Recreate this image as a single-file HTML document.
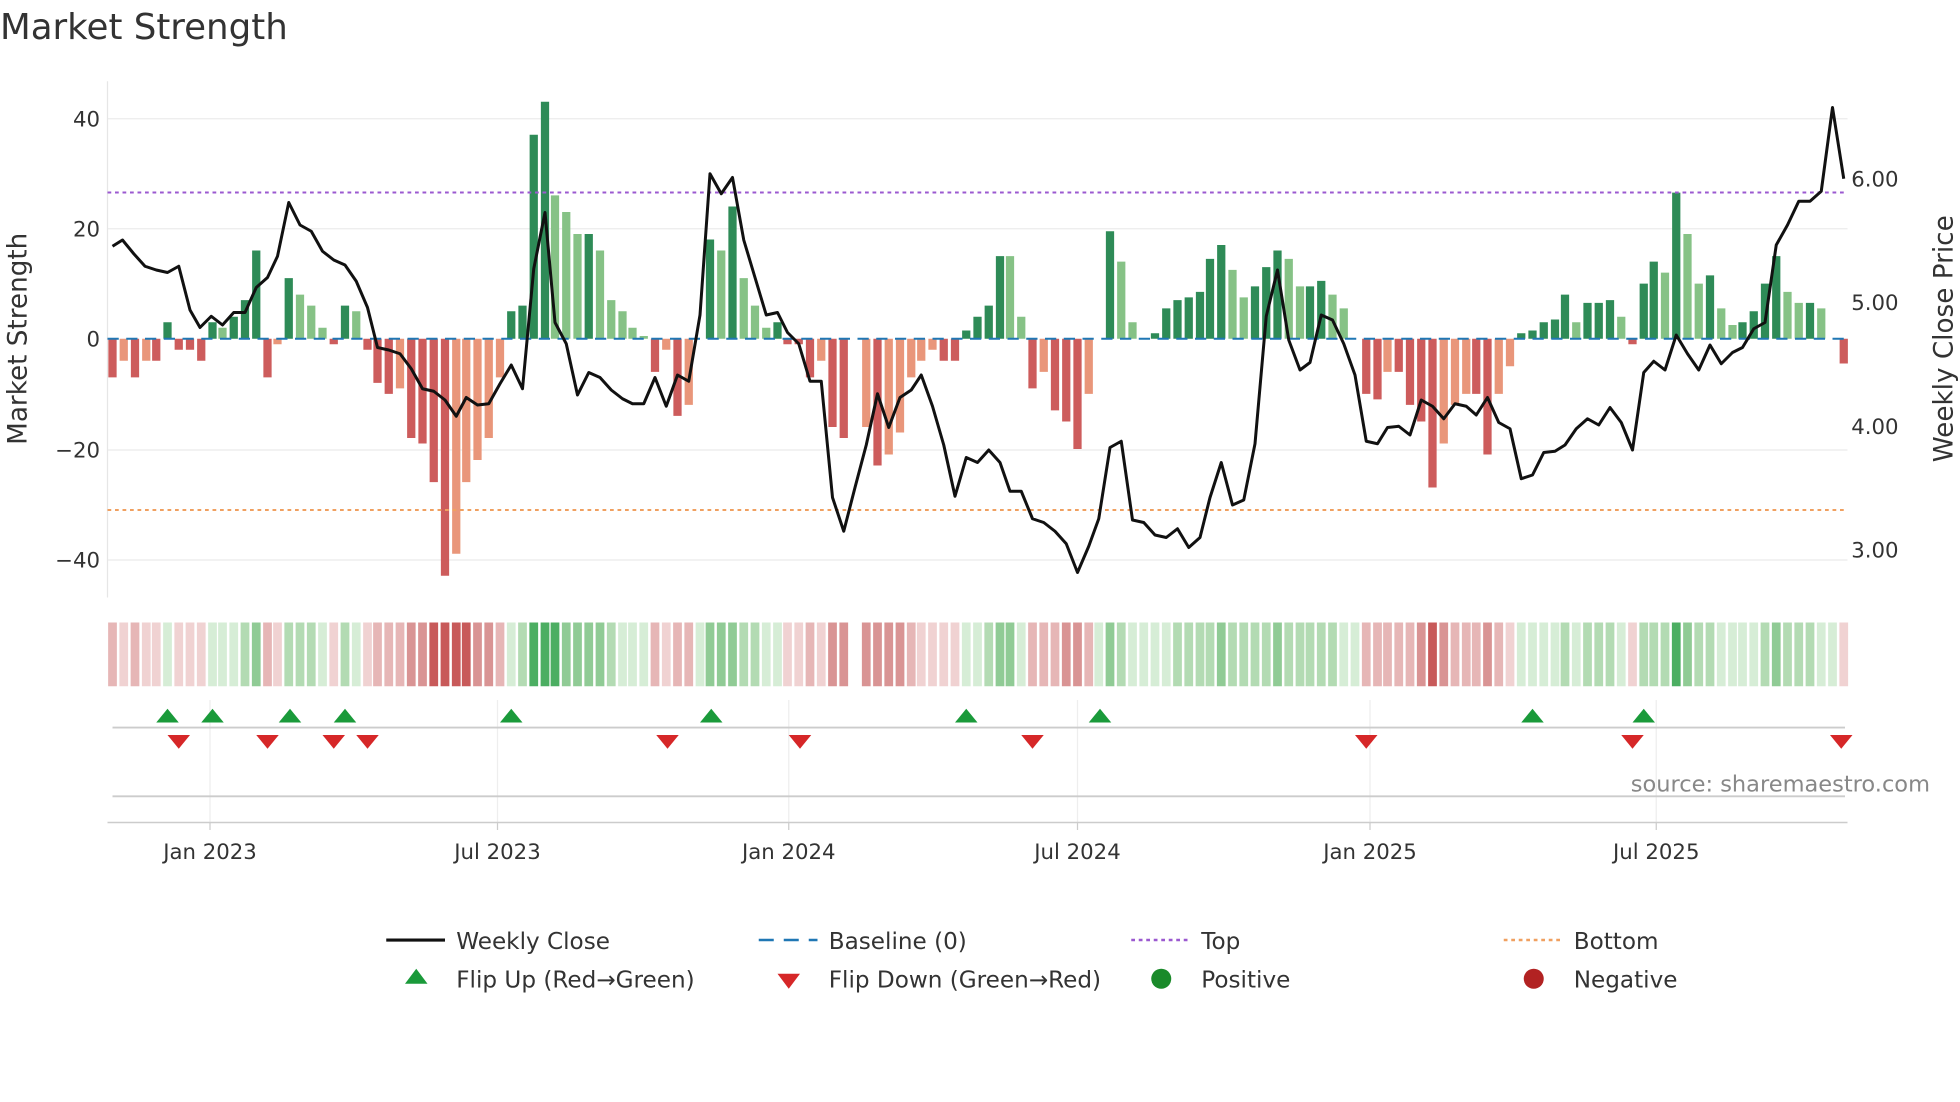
<!DOCTYPE html>
<html><head><meta charset="utf-8"><style>
html,body{margin:0;padding:0;background:#fff;}
svg{display:block;font-family:"DejaVu Sans","Liberation Sans",sans-serif;}
</style></head><body>
<svg width="1960" height="1102" viewBox="0 0 1568 881.6" xmlns="http://www.w3.org/2000/svg">
<rect width="1568" height="882" fill="#fff"/>
<text x="0" y="31" font-size="28.5" fill="#333">Market Strength</text>
<g stroke="#ebebeb" stroke-width="1">
<line x1="86" x2="1478" y1="95" y2="95"/><line x1="86" x2="1478" y1="183" y2="183"/>
<line x1="86" x2="1478" y1="360" y2="360"/><line x1="86" x2="1478" y1="448" y2="448"/>
</g>
<line x1="86" x2="86" y1="65" y2="478" stroke="#e6e6e6"/>
<g font-size="17" fill="#333" text-anchor="end">
<text x="80" y="101">40</text><text x="80" y="189">20</text><text x="80" y="277">0</text>
<text x="80" y="366">−20</text><text x="80" y="454">−40</text>
</g>
<g font-size="17" fill="#333">
<text x="1481" y="149">6.00</text><text x="1481" y="248">5.00</text><text x="1481" y="347">4.00</text><text x="1481" y="446">3.00</text>
</g>
<text transform="translate(21,271) rotate(-90)" font-size="21" fill="#333" text-anchor="middle">Market Strength</text>
<text transform="translate(1562,271) rotate(-90)" font-size="21" fill="#333" text-anchor="middle">Weekly Close Price</text>
<g fill="none" stroke-width="6.6">
<path stroke="#2e8b57" d="M134 271V257.8M170 271V257.8M187 271V253.4M196 271V240.1M205 271V200.4M231 271V222.5M276 271V244.5M409 271V249M418 271V244.5M427 271V107.8M436 271V81.4M471 271V187.2M568 271V191.6M586 271V165.2M622 271V257.8M773 271V264.4M782 271V253.4M791 271V244.5M800 271V204.9M888 271V185M924 271V266.6M933 271V246.7M942 271V240.1M951 271V237.9M960 271V233.5M968 271V207.1M977 271V196M1004 271V229.1M1013 271V213.7M1022 271V200.4M1048 271V229.1M1057 271V224.7M1217 271V266.6M1226 271V264.4M1235 271V257.8M1244 271V255.6M1252 271V235.7M1270 271V242.3M1279 271V242.3M1288 271V240.1M1315 271V226.9M1323 271V209.3M1341 271V154.1M1368 271V220.3M1394 271V257.8M1403 271V249M1412 271V226.9M1421 271V204.9M1448 271V242.3"/>
<path stroke="#86c286" d="M178 271V262.2M240 271V235.7M249 271V244.5M258 271V262.2M285 271V249M444 271V156.3M453 271V169.6M462 271V187.2M480 271V200.4M489 271V240.1M498 271V249M506 271V262.2M515 271V268.8M577 271V200.4M595 271V222.5M604 271V244.5M613 271V262.2M808 271V204.9M817 271V253.4M897 271V209.3M906 271V257.8M986 271V215.9M995 271V237.9M1031 271V207.1M1040 271V229.1M1066 271V235.7M1075 271V246.7M1261 271V257.8M1297 271V253.4M1332 271V218.1M1350 271V187.2M1359 271V226.9M1377 271V246.7M1386 271V260M1430 271V233.5M1439 271V242.3M1457 271V246.7"/>
<path stroke="#cd5c5c" d="M90 271V301.9M108 271V301.9M125 271V288.6M143 271V279.8M152 271V279.8M161 271V288.6M214 271V301.9M267 271V275.4M294 271V279.8M302 271V306.3M311 271V315.1M329 271V350.4M338 271V354.8M347 271V385.7M356 271V460.6M524 271V297.5M542 271V332.7M630 271V275.4M639 271V275.4M648 271V301.9M666 271V341.6M675 271V350.4M702 271V372.4M755 271V288.6M764 271V288.6M826 271V310.7M844 271V328.3M853 271V337.2M862 271V359.2M1093 271V315.1M1102 271V319.5M1119 271V297.5M1128 271V323.9M1137 271V337.2M1146 271V390M1181 271V315.1M1190 271V363.6M1306 271V275.4M1475 271V290.8"/>
<path stroke="#e9967a" d="M99 271V288.6M117 271V288.6M222 271V275.4M320 271V310.7M365 271V443M373 271V385.7M382 271V368M391 271V350.4M400 271V301.9M533 271V279.8M551 271V323.9M657 271V288.6M693 271V341.6M711 271V363.6M720 271V346M729 271V301.9M737 271V288.6M746 271V279.8M835 271V297.5M871 271V315.1M1110 271V297.5M1155 271V354.8M1164 271V323.9M1173 271V315.1M1199 271V315.1M1208 271V293"/>
</g>
<line x1="86" x2="1478" y1="271" y2="271" stroke="#1f77b4" stroke-width="1.6" stroke-dasharray="9,6"/>
<line x1="86" x2="1478" y1="154" y2="154" stroke="#9b59d0" stroke-width="1.6" stroke-dasharray="3,3"/>
<line x1="86" x2="1478" y1="408" y2="408" stroke="#f0a060" stroke-width="1.6" stroke-dasharray="3,3"/>
<polyline fill="none" stroke="#111" stroke-width="2.4" stroke-linejoin="round" points="90,197 98,192 107,203 116,213 125,216 134,218 143,213 152,248 160,262 169,253 178,260 187,250 196,250 205,230 214,222 222,205 231,162 240,180 249,185 258,201 267,208 276,212 285,225 294,246 302,278 311,280 320,283 329,295 338,311 347,313 356,320 365,333 373,318 382,324 391,323 400,307 409,292 418,311 427,215 436,170 444,258 453,275 462,316 471,298 480,302 489,312 498,319 506,323 515,323 524,302 533,325 542,300 551,305 560,252 568,139 577,155 586,142 595,192 604,222 613,252 622,250 630,266 639,275 648,305 657,305 666,398 675,425 684,390 693,356 702,315 711,342 720,318 729,312 737,300 746,325 755,356 764,397 773,366 782,370 791,360 800,370 808,393 817,393 826,415 835,418 844,425 853,435 862,458 871,437 879,415 888,358 897,353 906,416 915,418 924,428 933,430 942,423 951,438 960,430 968,398 977,370 986,404 995,400 1004,355 1013,253 1022,216 1031,272 1040,296 1048,290 1057,252 1066,256 1075,275 1084,300 1093,353 1102,355 1110,342 1119,341 1128,348 1137,320 1146,325 1155,335 1164,323 1173,325 1181,332 1190,318 1199,338 1208,343 1217,383 1226,380 1235,362 1244,361 1252,356 1261,343 1270,335 1279,340 1288,326 1297,338 1306,360 1315,298 1323,289 1332,296 1341,268 1350,283 1359,296 1368,276 1377,291 1386,282 1394,278 1403,263 1412,258 1421,196 1430,180 1439,161 1448,161 1457,153 1466,86 1475,143"/>
<g fill="none" stroke-width="7">
<path stroke="#d6edd6" d="M134 498V549M170 498V549M178 498V549M187 498V549M258 498V549M285 498V549M409 498V549M498 498V549M506 498V549M515 498V549M560 498V549M613 498V549M622 498V549M773 498V549M782 498V549M817 498V549M879 498V549M906 498V549M915 498V549M924 498V549M933 498V549M1075 498V549M1084 498V549M1217 498V549M1226 498V549M1235 498V549M1244 498V549M1261 498V549M1297 498V549M1377 498V549M1386 498V549M1394 498V549M1403 498V549M1457 498V549M1466 498V549"/>
<path stroke="#b3dbb3" d="M196 498V549M231 498V549M240 498V549M249 498V549M276 498V549M418 498V549M489 498V549M595 498V549M604 498V549M791 498V549M897 498V549M942 498V549M951 498V549M960 498V549M968 498V549M986 498V549M995 498V549M1004 498V549M1013 498V549M1031 498V549M1040 498V549M1048 498V549M1057 498V549M1066 498V549M1252 498V549M1270 498V549M1279 498V549M1288 498V549M1315 498V549M1323 498V549M1332 498V549M1359 498V549M1368 498V549M1412 498V549M1430 498V549M1439 498V549M1448 498V549"/>
<path stroke="#90cb95" d="M205 498V549M453 498V549M462 498V549M471 498V549M480 498V549M568 498V549M577 498V549M586 498V549M800 498V549M808 498V549M888 498V549M977 498V549M1022 498V549M1350 498V549M1421 498V549"/>
<path stroke="#4cae62" d="M427 498V549M436 498V549M444 498V549M1341 498V549"/>
<path stroke="#f0d2d2" d="M99 498V549M117 498V549M125 498V549M143 498V549M152 498V549M161 498V549M222 498V549M267 498V549M294 498V549M533 498V549M630 498V549M639 498V549M657 498V549M737 498V549M746 498V549M755 498V549M764 498V549M1208 498V549M1306 498V549M1475 498V549"/>
<path stroke="#e6b6b6" d="M90 498V549M108 498V549M214 498V549M302 498V549M311 498V549M320 498V549M400 498V549M524 498V549M542 498V549M551 498V549M648 498V549M729 498V549M826 498V549M835 498V549M844 498V549M871 498V549M1093 498V549M1102 498V549M1110 498V549M1119 498V549M1128 498V549M1164 498V549M1173 498V549M1181 498V549M1199 498V549"/>
<path stroke="#d99494" d="M329 498V549M338 498V549M382 498V549M391 498V549M666 498V549M675 498V549M693 498V549M702 498V549M711 498V549M720 498V549M853 498V549M862 498V549M1137 498V549M1155 498V549M1190 498V549"/>
<path stroke="#c85a5a" d="M347 498V549M356 498V549M365 498V549M373 498V549M1146 498V549"/>
</g>
<g stroke="#eee"><line x1="168" x2="168" y1="560" y2="658"/><line x1="398" x2="398" y1="560" y2="658"/><line x1="631" x2="631" y1="560" y2="658"/><line x1="862" x2="862" y1="560" y2="658"/><line x1="1096" x2="1096" y1="560" y2="658"/><line x1="1325" x2="1325" y1="560" y2="658"/></g>
<line x1="90" x2="1476" y1="582" y2="582" stroke="#ccc" stroke-width="1.5"/>
<line x1="90" x2="1476" y1="637" y2="637" stroke="#ccc" stroke-width="1.5"/>
<line x1="86" x2="1478" y1="658" y2="658" stroke="#ccc" stroke-width="1.2"/>
<g fill="#1a9a3a">
<polygon points="125,578 143,578 134,567"/><polygon points="161,578 179,578 170,567"/><polygon points="223,578 241,578 232,567"/><polygon points="267,578 285,578 276,567"/><polygon points="400,578 418,578 409,567"/><polygon points="560,578 578,578 569,567"/><polygon points="764,578 782,578 773,567"/><polygon points="871,578 889,578 880,567"/><polygon points="1217,578 1235,578 1226,567"/><polygon points="1306,578 1324,578 1315,567"/>
</g>
<g fill="#d62728">
<polygon points="134,588 152,588 143,599"/><polygon points="205,588 223,588 214,599"/><polygon points="258,588 276,588 267,599"/><polygon points="285,588 303,588 294,599"/><polygon points="525,588 543,588 534,599"/><polygon points="631,588 649,588 640,599"/><polygon points="817,588 835,588 826,599"/><polygon points="1084,588 1102,588 1093,599"/><polygon points="1297,588 1315,588 1306,599"/><polygon points="1464,588 1482,588 1473,599"/>
</g>
<text x="1544" y="633" font-size="18" fill="#888" text-anchor="end">source: sharemaestro.com</text>
<g font-size="17" fill="#333" text-anchor="middle">
<text x="168" y="687">Jan 2023</text><text x="398" y="687">Jul 2023</text><text x="631" y="687">Jan 2024</text>
<text x="862" y="687">Jul 2024</text><text x="1096" y="687">Jan 2025</text><text x="1325" y="687">Jul 2025</text>
</g>
<g stroke="#ccc"><line x1="168" x2="168" y1="658" y2="664"/><line x1="398" x2="398" y1="658" y2="664"/><line x1="631" x2="631" y1="658" y2="664"/><line x1="862" x2="862" y1="658" y2="664"/><line x1="1096" x2="1096" y1="658" y2="664"/><line x1="1325" x2="1325" y1="658" y2="664"/></g>
<g font-size="18.5" fill="#333">
<line x1="309" x2="356" y1="752" y2="752" stroke="#111" stroke-width="2.5"/><text x="365" y="759">Weekly Close</text>
<line x1="607" x2="654" y1="752" y2="752" stroke="#1f77b4" stroke-width="2" stroke-dasharray="12,8"/><text x="663" y="759">Baseline (0)</text>
<line x1="905" x2="952" y1="752" y2="752" stroke="#9b59d0" stroke-width="2" stroke-dasharray="3,3"/><text x="961" y="759">Top</text>
<line x1="1203" x2="1250" y1="752" y2="752" stroke="#f0a060" stroke-width="2" stroke-dasharray="3,3"/><text x="1259" y="759">Bottom</text>
<polygon points="324,787 342,787 333,775" fill="#1a9a3a"/><text x="365" y="790">Flip Up (Red→Green)</text>
<polygon points="622,779 640,779 631,791" fill="#d62728"/><text x="663" y="790">Flip Down (Green→Red)</text>
<circle cx="929" cy="783" r="8" fill="#1a8a2a"/><text x="961" y="790">Positive</text>
<circle cx="1227" cy="783" r="8" fill="#b22222"/><text x="1259" y="790">Negative</text>
</g>
</svg>
</body></html>
